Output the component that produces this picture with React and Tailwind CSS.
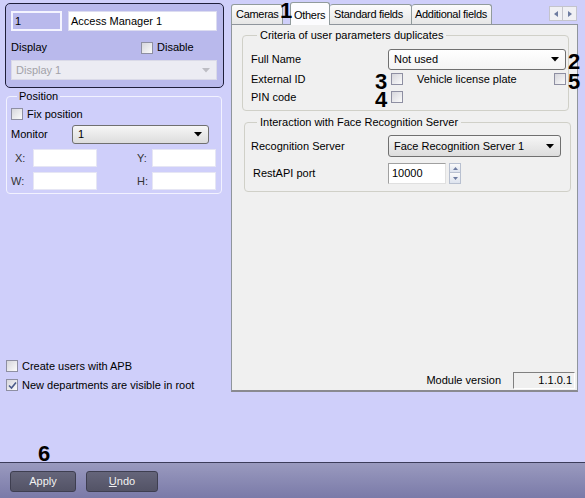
import React from "react";

const font = { fontFamily: '"Liberation Sans", Arial, sans-serif' };

function Check({ checked }) {
  return (
    <span className="w-[12px] h-[12px] shrink-0 border border-[#8e8fa2] bg-gradient-to-br from-[#d6d6dc] to-[#fbfbfb] flex items-center justify-center">
      {checked && (
        <svg width="9" height="9" viewBox="0 0 9 9">
          <path d="M1 4.5 L3.5 7 L8 1.5" fill="none" stroke="#4a5a8a" strokeWidth="1.6" />
        </svg>
      )}
    </span>
  );
}

function Arrow({ color = "#000" }) {
  return (
    <svg width="8" height="5" viewBox="0 0 8 5" className="shrink-0">
      <path d="M0 0 H8 L4 4.5 Z" fill={color} />
    </svg>
  );
}

function Select({ value, className }) {
  return (
    <div
      className={
        "flex items-center justify-between pl-[5px] pr-[6px] rounded-[3px] border border-[#707070] bg-gradient-to-b from-[#f6f6f6] to-[#dddddd] " +
        className
      }
    >
      <span className="whitespace-nowrap">{value}</span>
      <Arrow />
    </div>
  );
}

function Marker({ n, className }) {
  return (
    <span className={"absolute text-[22px] leading-none font-bold text-black " + className}>{n}</span>
  );
}

const tab = "h-[20px] border border-b-0 border-[#919b9c] rounded-t-[3px] bg-gradient-to-b from-[#fcfcfc] to-[#e6e6e6] flex items-center whitespace-nowrap tracking-[-0.3px]";

export default function App() {
  return (
    <div className="relative w-[585px] h-[498px] bg-[#cfcffa] flex flex-col text-[11px] text-black overflow-hidden" style={font}>
      <div className="flex h-[462px]">
        {/* left column */}
        <div className="w-[231px] flex flex-col">
          <div className="ml-[5px] mt-[3px] w-[219px] h-[85px] rounded-[5px] border border-[#1e1e3a] bg-[#b9b9ec] pl-[5px] pr-[6px] pt-[7px]">
            <div className="flex gap-[6px]">
              <div className="w-[51px] h-[20px] border-2 border-[#f4f4ff] flex items-center px-[2px]">1</div>
              <div className="w-[149px] h-[20px] bg-white border border-[#dcdcf0] flex items-center px-[2px]">Access Manager 1</div>
            </div>
            <div className="mt-[10px] h-[13px] flex items-center">
              <span className="w-[130px]">Display</span>
              <Check />
              <span className="ml-[4px]">Disable</span>
            </div>
            <div className="mt-[6px] h-[20px] w-[206px] bg-[#ececf3] border border-[#dadae8] flex items-center justify-between pl-[4px] pr-[6px] text-[#a2a2a8]">
              <span>Display 1</span>
              <Arrow color="#bdbdc4" />
            </div>
          </div>

          <fieldset className="ml-[6px] mt-[2px] w-[216px] rounded-[4px] border border-[#f2f2ff] pl-[4px] pr-[4px] pb-[3px]">
            <legend className="ml-[6px] px-[2px] leading-[13px]">Position</legend>
            <div className="mt-[5px] h-[12px] flex items-center">
              <Check />
              <span className="ml-[4px]">Fix position</span>
            </div>
            <div className="mt-[5px] flex items-center">
              <span className="w-[61px]">Monitor</span>
              <Select value="1" className="w-[137px] h-[19px]" />
            </div>
            <div className="mt-[5px] flex items-center">
              <span className="w-[22px] pl-[4px] text-[#333]">X:</span>
              <div className="w-[64px] h-[18px] bg-white border border-[#e6e6f4]" />
              <span className="ml-[40px] w-[15px] text-[#333]">Y:</span>
              <div className="w-[64px] h-[18px] bg-white border border-[#e6e6f4]" />
            </div>
            <div className="mt-[5px] flex items-center">
              <span className="w-[22px] text-[#333]">W:</span>
              <div className="w-[64px] h-[18px] bg-white border border-[#e6e6f4]" />
              <span className="ml-[40px] w-[15px] text-[#333]">H:</span>
              <div className="w-[64px] h-[18px] bg-white border border-[#e6e6f4]" />
            </div>
          </fieldset>

          <div className="mt-auto mb-[71px] ml-[6px] flex flex-col gap-[7px]">
            <div className="flex items-center h-[12px]">
              <Check />
              <span className="ml-[4px]">Create users with APB</span>
            </div>
            <div className="flex items-center h-[12px]">
              <Check checked />
              <span className="ml-[4px]">New departments are visible in root</span>
            </div>
          </div>
        </div>

        {/* right column */}
        <div className="w-[347px] flex flex-col">
          <div className="h-[24px] flex items-end relative z-10">
            <div className={tab + " w-[52px] pl-[4px]"}>Cameras</div>
            <div className="ml-[7px] w-[40px] h-[23px] -mb-[1px] border border-b-0 border-[#919b9c] rounded-t-[3px] bg-[#fcfcfe] flex items-start pt-[4px] pl-[3px] whitespace-nowrap tracking-[-0.3px]">Others</div>
            <div className={tab + " border-l-0 w-[82px] pl-[4px]"}>Standard fields</div>
            <div className={tab + " border-l-0 w-[80px] pl-[3px]"}>Additional fields</div>
            <div className="ml-auto mr-[1px] self-start mt-[6px] flex">
              <div className="w-[14px] h-[15px] border border-[#c4c4cc] bg-[#f0f0f4] flex items-center justify-center">
                <svg width="4" height="6" viewBox="0 0 4 6"><path d="M4 0 V6 L0 3 Z" fill="#6d7ba0" /></svg>
              </div>
              <div className="w-[14px] h-[15px] border border-l-0 border-[#c4c4cc] bg-[#f0f0f4] flex items-center justify-center">
                <svg width="4" height="6" viewBox="0 0 4 6"><path d="M0 0 V6 L4 3 Z" fill="#6d7ba0" /></svg>
              </div>
            </div>
          </div>

          <div className="h-[368px] bg-[#f0f0f0] border border-[#8f959c] border-b-2 border-b-[#8a8a90] flex flex-col">
            <fieldset className="ml-[10px] mt-[4px] w-[327px] rounded-[4px] border border-[#d0d0c8] pl-[8px] pr-[1px] pb-[4px]">
              <legend className="ml-[6px] px-[3px] leading-[13px]">Criteria of user parameters duplicates</legend>
              <div className="mt-[7px] flex items-center">
                <span className="w-[137px]">Full Name</span>
                <Select value="Not used" className="w-[178px] h-[21px] bg-white from-white to-[#f4f4f4]" />
              </div>
              <div className="h-[18px] flex items-center">
                <span className="w-[140px]">External ID</span>
                <Check />
                <span className="ml-[14px]">Vehicle license plate</span>
                <span className="ml-auto mr-[1px]"><Check /></span>
              </div>
              <div className="h-[18px] flex items-center">
                <span className="w-[140px]">PIN code</span>
                <Check />
              </div>
            </fieldset>

            <fieldset className="ml-[12px] mt-[5px] w-[327px] rounded-[4px] border border-[#d0d0c8] pl-[6px] pb-[7px]">
              <legend className="ml-[6px] px-[3px] leading-[13px]">Interaction with Face Recognition Server</legend>
              <div className="mt-[6px] flex items-center">
                <span className="w-[137px]">Recognition Server</span>
                <Select value="Face Recognition Server 1" className="w-[173px] h-[22px]" />
              </div>
              <div className="mt-[6px] flex items-center">
                <span className="w-[137px] pl-[2px]">RestAPI port</span>
                <div className="w-[58px] h-[21px] bg-white border border-[#a0a0a0] border-r-[#e0e0e0] border-b-[#e0e0e0] flex items-center pl-[3px]">10000</div>
                <div className="ml-[3px] w-[12px] h-[21px] flex flex-col">
                  <div className="h-[10px] border border-[#b8c0d0] bg-gradient-to-b from-[#fafafa] to-[#dde3ee] flex items-center justify-center">
                    <svg width="5" height="3" viewBox="0 0 5 3"><path d="M0 3 H5 L2.5 0 Z" fill="#6d7ba0" /></svg>
                  </div>
                  <div className="h-[11px] border border-t-0 border-[#b8c0d0] bg-gradient-to-b from-[#fafafa] to-[#dde3ee] flex items-center justify-center">
                    <svg width="5" height="3" viewBox="0 0 5 3"><path d="M0 0 H5 L2.5 3 Z" fill="#6d7ba0" /></svg>
                  </div>
                </div>
              </div>
            </fieldset>

            <div className="mt-auto mb-[1px] flex items-center justify-end pr-[2px]">
              <span>Module version</span>
              <div className="ml-[12px] w-[62px] h-[17px] border border-[#808080] border-r-white border-b-white flex items-center justify-end pr-[2px]">1.1.0.1</div>
            </div>
          </div>
        </div>
      </div>

      {/* bottom bar */}
      <div className="flex-1 border-t border-[#3c3c5a] bg-gradient-to-b from-[#9a9abf] to-[#7a7aa8] flex items-start pt-[8px] pl-[10px] gap-[10px]">
        <button className="w-[66px] h-[21px] rounded-[3px] border border-[#3e3e50] bg-gradient-to-b from-[#65657a] to-[#535366] text-[#f2f2f2] flex items-center justify-center">Apply</button>
        <button className="w-[72px] h-[21px] rounded-[3px] border border-[#3e3e50] bg-gradient-to-b from-[#65657a] to-[#535366] text-[#f2f2f2] flex items-center justify-center"><span className="underline">U</span>ndo</button>
      </div>

      <Marker n="1" className="left-[280px] top-0 z-20" />
      <Marker n="2" className="left-[568px] top-[51px]" />
      <Marker n="3" className="left-[375px] top-[71px]" />
      <Marker n="4" className="left-[375px] top-[89px]" />
      <Marker n="5" className="left-[568px] top-[71px]" />
      <Marker n="6" className="left-[38px] top-[443px]" />
    </div>
  );
}
